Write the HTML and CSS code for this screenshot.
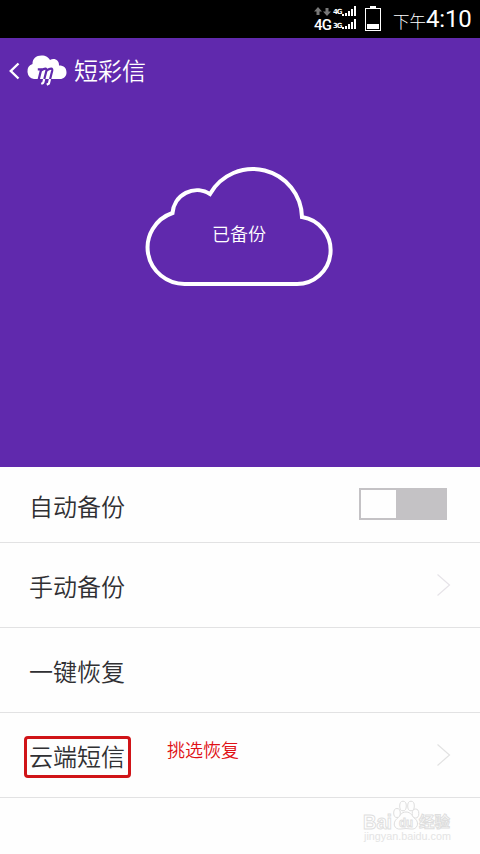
FILE: index.html
```html
<!DOCTYPE html>
<html lang="zh-CN">
<head>
<meta charset="utf-8">
<title>短彩信</title>
<link rel="stylesheet" href="styles.css">
</head>
<body>
<div class="status">
  <div class="network">
    <svg class="arrows" width="17" height="9" viewBox="0 0 17 9"><path d="M4 0L8 4.500H5.500V8H2.500V4.500H0zM11.500 1H14.500V4.500H17L13 9L9 4.500H11.500z" fill="#777"/></svg>
    <span class="net-small">4G</span>
    <svg class="bars" width="14" height="10" viewBox="0 0 14 10"><path d="M0 8h2v2H0zM3 7h2v3H3zM6 5h2v5H6zM9 3h2v7H9zM12 0h2v10h-2z" fill="#fff"/></svg>
    <span class="net-big">4G</span>
    <span class="net-small">3G</span>
    <svg class="bars" width="14" height="10" viewBox="0 0 14 10"><path d="M0 8h2v2H0zM3 7h2v3H3zM6 5h2v5H6zM9 3h2v7H9zM12 0h2v10h-2z" fill="#fff"/></svg>
  </div>
  <svg class="battery" width="16" height="25" viewBox="0 0 16 25"><path d="M5 0h6v2H5z" fill="#fff"/><rect x=".5" y="2.500" width="15" height="22" fill="none" stroke="#fff"/><path d="M2 18h12v5H2z" fill="#fff"/></svg>
  <span class="ampm">下午</span><span class="clock">4:10</span>
</div>
<div class="hero">
  <div class="header">
    <svg class="back" width="12" height="18" viewBox="0 0 12 18"><path d="M9.500 1.500L1.800 9L9.500 16.500" fill="none" stroke="#fff" stroke-width="2.400"/></svg>
    <svg class="logo" width="42" height="31" viewBox="0 0 42 31">
      <path d="M8 24A7.800 7.800 0 0 1 6.500 9C6.500 3.500 10 .5 15.500 .5C20 .5 22.500 2.500 24 5C28.500 2.500 33.500 5.500 33 10.500C38 10.500 40.500 13 40.500 17.500C40.500 21.500 37.500 24 34 24Z" fill="#fff"/>
      <g fill="none" stroke="#6029ad">
        <path d="M11.800 14.300H15.200L12.700 24.500" stroke-width="2.300"/>
        <path d="M15 15.500Q21 11.500 20.400 15.800L18.200 24.500" stroke-width="2.200"/>
        <path d="M20.400 15.500Q27 11.500 26.200 15.800L24 24.500" stroke-width="2.200"/>
      </g>
      <path d="M18.200 24L17.400 27.200Q17 28.800 15.200 28.300M24 24L22.900 28.500L20.800 29.700" fill="none" stroke="#fff" stroke-width="2.200"/>
    </svg>
    <h1 class="title">短彩信</h1>
  </div>
  <div class="cloud">
    <svg width="190" height="124" viewBox="144 164 190 124"><path d="M185 284A37 36.500 0 0 1 172.500 213A24.500 24.500 0 0 1 210 194A49.200 49.200 0 0 1 302 217A33.700 33.700 0 0 1 296 284Z" fill="none" stroke="#fff" stroke-width="4"/></svg>
    <span class="state">已备份</span>
  </div>
</div>
<div class="list">
  <div class="row row-first"><span class="label">自动备份</span><span class="switch"><i class="knob"></i></span></div>
  <div class="row"><span class="label">手动备份</span><svg class="chevron" width="15" height="24" viewBox="0 0 15 24"><path d="M1.500 1.500L13.500 12L1.500 22.500" fill="none" stroke="#e6e3e8" stroke-width="1.200"/></svg></div>
  <div class="row"><span class="label">一键恢复</span></div>
  <div class="row"><span class="label marked">云端短信</span><span class="note">挑选恢复</span><svg class="chevron" width="15" height="24" viewBox="0 0 15 24"><path d="M1.500 1.500L13.500 12L1.500 22.500" fill="none" stroke="#e2e2e2" stroke-width="1.200"/></svg></div>
</div>
<div class="watermark">
  <svg width="92" height="46" viewBox="0 0 92 46">
    <g fill="#fefefe" stroke="#dedede" stroke-width="1">
      <text class="brand" x="0" y="30" textLength="29" lengthAdjust="spacingAndGlyphs">Bai</text>
      <path d="M43 13C48 13 49 17 52 19.500C57 24 54 31 48 30Q43 29 38 30C31 31 29 24 34 19.500C37 17 38 13 43 13Z"/>
      <ellipse cx="34" cy="14" rx="3.300" ry="4.500"/><ellipse cx="40" cy="7" rx="3.300" ry="4.800"/><ellipse cx="48" cy="7" rx="3.300" ry="4.800"/><ellipse cx="52.500" cy="14.500" rx="3.300" ry="4.500"/>
      <text class="du" x="36" y="27.500" textLength="14" lengthAdjust="spacingAndGlyphs">du</text>
      <text class="exp" x="56" y="28" textLength="31" lengthAdjust="spacingAndGlyphs">经验</text>
    </g>
    <text class="url" x="1" y="41" textLength="87" lengthAdjust="spacingAndGlyphs">jingyan.baidu.com</text>
  </svg>
</div>
</body>
</html>
```
FILE: styles.css
```css
* { box-sizing: border-box; }
body {
  margin: 0;
  width: 480px;
  height: 854px;
  overflow: hidden;
  background: #fefefe;
  font-family: Roboto, "Noto Sans CJK SC", sans-serif;
}
svg { display: block; }
.status {
  height: 38px;
  background: #000;
  color: #fff;
  display: flex;
  align-items: flex-start;
  padding: 6px 0 0 314px;
  white-space: nowrap;
}
.network {
  display: grid;
  grid-template-columns: 19px 9px 14px;
  grid-template-rows: 10px 14px;
  row-gap: 1px;
  align-items: end;
}
.arrows { align-self: start; margin-top: 1px; }
.net-small { font: 700 7px/7px "DejaVu Sans", sans-serif; letter-spacing: -1px; }
.net-big { font-size: 15px; line-height: 15px; font-weight: 500; letter-spacing: -0.8px; }
.net-big, .net-big ~ .net-small, .net-big ~ .bars { align-self: start; }
.net-big { margin-top: 1px; }
.net-big ~ .bars { margin-top: 2px; }
.net-big ~ .net-small { margin-top: 6px; }
.battery { margin-left: 9px; }
.ampm { font-size: 16.5px; line-height: 30px; margin: 2px 0 0 12px; font-weight: 300; }
.clock { font-size: 24px; line-height: 26px; letter-spacing: -0.2px; }
.hero { height: 429px; background: #6029ad; color: #fff; }
.header { height: 66px; display: flex; align-items: center; padding-left: 9px; }
.logo { margin: -1px 0 0 5px; }
.title { margin: 2px 0 0 6px; font-size: 24px; line-height: 36px; font-weight: 350; }
.cloud { width: 190px; height: 124px; margin: 60px 0 0 144px; display: grid; }
.cloud > * { grid-area: 1 / 1; }
.state { font-size: 18px; line-height: 26px; font-weight: 350; margin: 58px 0 0 68px; }
.row {
  height: 85px;
  border-bottom: 1px solid #e2e2e3;
  display: flex;
  align-items: center;
  padding: 2px 29px 0 24px;
}
.row-first { height: 76px; padding: 0 33px 0 24px; }
.label { font-size: 24px; line-height: 36px; font-weight: 350; color: #303033; padding: 0 3px 0 5px; margin-top: 3px; }
.row-first .label { margin-top: 6px; }
.marked { border: 3px solid #d01418; border-radius: 4px; padding: 0 1px 0 2px; width: 107px; height: 42px; line-height: 39px; margin-top: 2px; }
.switch { width: 88px; height: 32px; margin: -2px 0 0 auto; padding: 2px; background: #c4c2c5; }
.knob { display: block; width: 35px; height: 28px; background: #fefefe; }
.chevron { margin: -3px 0 0 auto; }
.note { margin: -11px 0 0 36px; font: 18px/26px "Liberation Serif", "Noto Sans CJK SC", serif; font-weight: 350; color: #e01015; }
.watermark { margin: 1px 0 0 363px; }
.brand { font: 700 20px "Liberation Sans", sans-serif; }
.du { font: 700 13px "Liberation Sans", sans-serif; }
.exp { font: 700 15px "Noto Sans CJK SC", sans-serif; }
.url { font: 10px "Liberation Sans", sans-serif; fill: #e4e4e4; }
```
